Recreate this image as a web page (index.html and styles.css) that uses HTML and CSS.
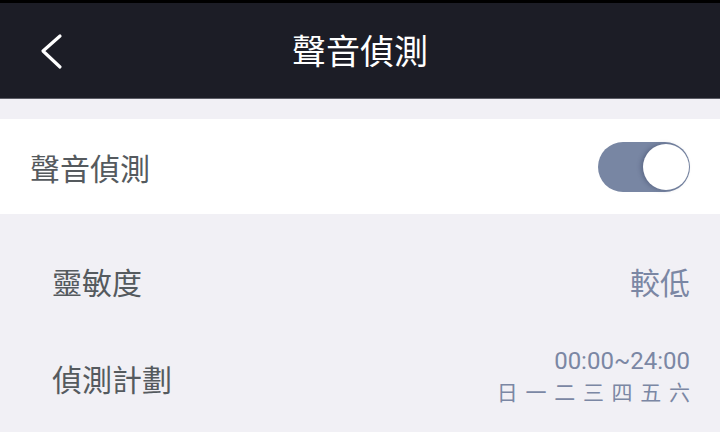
FILE: index.html
```html
<!DOCTYPE html>
<html lang="zh-Hant">
<head>
<meta charset="utf-8">
<title>聲音偵測</title>
<link rel="stylesheet" href="styles.css">
</head>
<body>
<div class="statusbar"></div>
<header class="topbar">
  <button class="back" aria-label="返回">
    <svg width="24" height="40" viewBox="0 0 24 40"><path d="M20 3 L3 18 L20 34" fill="none" stroke="#ffffff" stroke-width="3.2" stroke-linecap="round" stroke-linejoin="round"/></svg>
  </button>
  <h1 class="title">聲音偵測</h1>
</header>
<main class="content">
  <section class="card">
    <div class="row main-row">
      <span class="label">聲音偵測</span>
      <span class="switch on"><span class="knob"></span></span>
    </div>
  </section>
  <section class="list">
    <div class="row sub-row">
      <span class="label">靈敏度</span>
      <span class="value">較低</span>
    </div>
    <div class="row sub-row">
      <span class="label">偵測計劃</span>
      <span class="value stack">
        <span class="time">00:00~24:00</span>
        <span class="days">日 一 二 三 四 五 六</span>
      </span>
    </div>
  </section>
</main>
</body>
</html>
```
FILE: styles.css
```css
* { box-sizing: border-box; }
html, body { margin: 0; padding: 0; }
body {
  width: 720px;
  height: 432px;
  overflow: hidden;
  background: #f1f0f5;
  font-family: Roboto, "Noto Sans CJK TC", sans-serif;
}
.statusbar { height: 3px; background: #000; }
.topbar {
  height: 96px;
  background: #1c1d26;
  border-bottom: 1px solid #5c5d66;
  display: flex;
  align-items: center;
  justify-content: center;
  position: relative;
}
.back {
  position: absolute;
  left: 40px;
  top: 30px;
  background: none;
  border: 0;
  padding: 0;
  width: 24px;
  height: 40px;
}
.back svg { display: block; }
.title {
  margin: 0;
  font-family: "Noto Sans CJK TC", sans-serif;
  font-weight: 400;
  font-size: 34px;
  color: #ffffff;
  line-height: 1;
  margin-top: -1px;
}
.content { padding-top: 20px; }
.card { background: #ffffff; }
.row {
  display: flex;
  align-items: center;
  justify-content: space-between;
  padding-right: 30px;
}
.main-row { height: 95px; padding-left: 30px; }
.list { padding-top: 18px; }
.sub-row { height: 97px; padding-left: 52px; }
.label {
  font-family: "Noto Sans CJK TC", sans-serif;
  font-size: 30px;
  color: #555a5e;
  line-height: 1;
}
.value {
  font-family: "Noto Sans CJK TC", sans-serif;
  font-size: 30px;
  color: #7b87a4;
  line-height: 1;
}
.stack {
  display: flex;
  flex-direction: column;
  align-items: flex-end;
  gap: 8px;
  margin-top: -4px;
}
.time {
  font-family: Roboto, sans-serif;
  font-size: 24px;
  line-height: 1;
}
.days {
  font-family: "Noto Sans CJK TC", sans-serif;
  font-size: 21px;
  line-height: 1;
  word-spacing: 3px;
}
.switch {
  width: 92px;
  height: 50px;
  border-radius: 25px;
  background: #7886a3;
  position: relative;
  display: block;
}
.switch .knob {
  position: absolute;
  right: 1px;
  top: 2px;
  width: 46px;
  height: 46px;
  border-radius: 50%;
  background: #ffffff;
  box-shadow: -2px 0 4px rgba(40, 50, 80, 0.35);
}
```
